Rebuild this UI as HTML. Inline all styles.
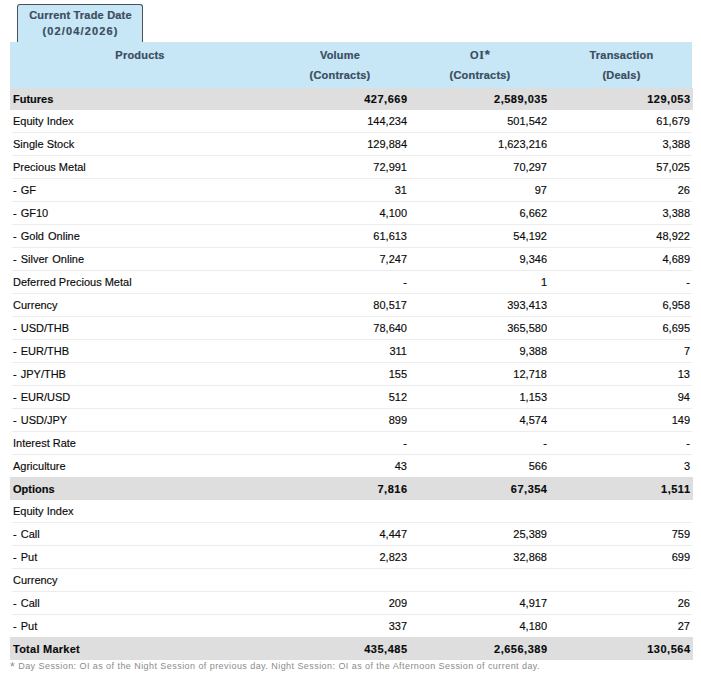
<!DOCTYPE html>
<html><head><meta charset="utf-8"><style>
html,body{margin:0;padding:0;background:#fff;width:701px;height:678px;overflow:hidden;position:relative;font-family:"Liberation Sans",sans-serif;}
.a{position:absolute;white-space:nowrap;}
.tab{position:absolute;left:17px;top:4px;width:124px;height:38px;border:1px solid #46525d;border-bottom:none;border-radius:3px 3px 0 0;background:#c7e7f7;}
.tabt{position:absolute;left:0;width:143px;text-align:center;font-weight:bold;font-size:11px;color:#3b4c5e;line-height:16px;-webkit-text-stroke:0.2px #3b4c5e;}
.hdr{position:absolute;left:10px;top:42px;width:682px;height:46px;background:#c7e7f7;}
.ht{position:absolute;font-weight:bold;font-size:11px;color:#3b4c5e;text-align:center;line-height:20px;letter-spacing:0.2px;-webkit-text-stroke:0.2px #3b4c5e;}
.g{position:absolute;left:10px;width:683px;background:#dedede;}
.ln{position:absolute;left:12px;width:680px;height:1px;background:#ececec;}
.c{position:absolute;font-size:11px;color:#0a0a0a;line-height:23px;white-space:nowrap;-webkit-text-stroke:0.15px #0a0a0a;}
.b{font-weight:bold;}
.r{text-align:right;}
.nb{letter-spacing:0.5px;margin-right:-0.5px}
.foot{position:absolute;left:10px;top:658px;font-size:9px;letter-spacing:0.44px;color:#8c8c8c;line-height:14px;white-space:nowrap;}
</style></head><body>

<div class="tab"></div>
<div class="tabt" style="top:7px;left:9px;width:143px;letter-spacing:0.2px">Current Trade Date</div>
<div class="tabt" style="top:23px;left:9px;width:143px;letter-spacing:1.15px">(02/04/2026)</div>
<div class="hdr"></div>
<div class="ht" style="left:10px;width:260px;top:45px">Products</div>
<div class="ht" style="left:270px;width:140px;top:45px">Volume</div>
<div class="ht" style="left:270px;width:140px;top:65px">(Contracts)</div>
<div class="ht" style="left:410px;width:140px;top:45px">O<span style="font-family:'Liberation Serif';font-size:12px;margin:0 0.5px">I</span><span style="font-size:13px;">*</span></div>
<div class="ht" style="left:410px;width:140px;top:65px">(Contracts)</div>
<div class="ht" style="left:550px;width:143px;top:45px">Transaction</div>
<div class="ht" style="left:550px;width:143px;top:65px">(Deals)</div>
<div class="g" style="top:88px;height:22px"></div>
<div class="c b" style="left:13px;top:88px">Futures</div>
<div class="c b r nb" style="right:294px;top:88px">427,669</div>
<div class="c b r nb" style="right:154px;top:88px">2,589,035</div>
<div class="c b r nb" style="right:11px;top:88px">129,053</div>
<div class="ln" style="top:132px"></div>
<div class="c" style="left:13px;top:110px">Equity Index</div>
<div class="c r" style="right:294px;top:110px">144,234</div>
<div class="c r" style="right:154px;top:110px">501,542</div>
<div class="c r" style="right:11px;top:110px">61,679</div>
<div class="ln" style="top:155px"></div>
<div class="c" style="left:13px;top:133px">Single Stock</div>
<div class="c r" style="right:294px;top:133px">129,884</div>
<div class="c r" style="right:154px;top:133px">1,623,216</div>
<div class="c r" style="right:11px;top:133px">3,388</div>
<div class="ln" style="top:178px"></div>
<div class="c" style="left:13px;top:156px">Precious Metal</div>
<div class="c r" style="right:294px;top:156px">72,991</div>
<div class="c r" style="right:154px;top:156px">70,297</div>
<div class="c r" style="right:11px;top:156px">57,025</div>
<div class="ln" style="top:201px"></div>
<div class="c" style="left:13px;top:179px;word-spacing:1px">- GF</div>
<div class="c r" style="right:294px;top:179px">31</div>
<div class="c r" style="right:154px;top:179px">97</div>
<div class="c r" style="right:11px;top:179px">26</div>
<div class="ln" style="top:224px"></div>
<div class="c" style="left:13px;top:202px;word-spacing:1px">- GF10</div>
<div class="c r" style="right:294px;top:202px">4,100</div>
<div class="c r" style="right:154px;top:202px">6,662</div>
<div class="c r" style="right:11px;top:202px">3,388</div>
<div class="ln" style="top:247px"></div>
<div class="c" style="left:13px;top:225px;word-spacing:1px">- Gold Online</div>
<div class="c r" style="right:294px;top:225px">61,613</div>
<div class="c r" style="right:154px;top:225px">54,192</div>
<div class="c r" style="right:11px;top:225px">48,922</div>
<div class="ln" style="top:270px"></div>
<div class="c" style="left:13px;top:248px;word-spacing:1px">- Silver Online</div>
<div class="c r" style="right:294px;top:248px">7,247</div>
<div class="c r" style="right:154px;top:248px">9,346</div>
<div class="c r" style="right:11px;top:248px">4,689</div>
<div class="ln" style="top:293px"></div>
<div class="c" style="left:13px;top:271px">Deferred Precious Metal</div>
<div class="c r" style="right:294px;top:271px">-</div>
<div class="c r" style="right:154px;top:271px">1</div>
<div class="c r" style="right:11px;top:271px">-</div>
<div class="ln" style="top:316px"></div>
<div class="c" style="left:13px;top:294px">Currency</div>
<div class="c r" style="right:294px;top:294px">80,517</div>
<div class="c r" style="right:154px;top:294px">393,413</div>
<div class="c r" style="right:11px;top:294px">6,958</div>
<div class="ln" style="top:339px"></div>
<div class="c" style="left:13px;top:317px;word-spacing:1px">- USD/THB</div>
<div class="c r" style="right:294px;top:317px">78,640</div>
<div class="c r" style="right:154px;top:317px">365,580</div>
<div class="c r" style="right:11px;top:317px">6,695</div>
<div class="ln" style="top:362px"></div>
<div class="c" style="left:13px;top:340px;word-spacing:1px">- EUR/THB</div>
<div class="c r" style="right:294px;top:340px">311</div>
<div class="c r" style="right:154px;top:340px">9,388</div>
<div class="c r" style="right:11px;top:340px">7</div>
<div class="ln" style="top:385px"></div>
<div class="c" style="left:13px;top:363px;word-spacing:1px">- JPY/THB</div>
<div class="c r" style="right:294px;top:363px">155</div>
<div class="c r" style="right:154px;top:363px">12,718</div>
<div class="c r" style="right:11px;top:363px">13</div>
<div class="ln" style="top:408px"></div>
<div class="c" style="left:13px;top:386px;word-spacing:1px">- EUR/USD</div>
<div class="c r" style="right:294px;top:386px">512</div>
<div class="c r" style="right:154px;top:386px">1,153</div>
<div class="c r" style="right:11px;top:386px">94</div>
<div class="ln" style="top:431px"></div>
<div class="c" style="left:13px;top:409px;word-spacing:1px">- USD/JPY</div>
<div class="c r" style="right:294px;top:409px">899</div>
<div class="c r" style="right:154px;top:409px">4,574</div>
<div class="c r" style="right:11px;top:409px">149</div>
<div class="ln" style="top:454px"></div>
<div class="c" style="left:13px;top:432px">Interest Rate</div>
<div class="c r" style="right:294px;top:432px">-</div>
<div class="c r" style="right:154px;top:432px">-</div>
<div class="c r" style="right:11px;top:432px">-</div>
<div class="c" style="left:13px;top:455px">Agriculture</div>
<div class="c r" style="right:294px;top:455px">43</div>
<div class="c r" style="right:154px;top:455px">566</div>
<div class="c r" style="right:11px;top:455px">3</div>
<div class="g" style="top:477px;height:23px"></div>
<div class="c b" style="left:13px;top:478px">Options</div>
<div class="c b r nb" style="right:294px;top:478px">7,816</div>
<div class="c b r nb" style="right:154px;top:478px">67,354</div>
<div class="c b r nb" style="right:11px;top:478px">1,511</div>
<div class="ln" style="top:522px"></div>
<div class="c" style="left:13px;top:500px">Equity Index</div>
<div class="ln" style="top:545px"></div>
<div class="c" style="left:13px;top:523px;word-spacing:1px">- Call</div>
<div class="c r" style="right:294px;top:523px">4,447</div>
<div class="c r" style="right:154px;top:523px">25,389</div>
<div class="c r" style="right:11px;top:523px">759</div>
<div class="ln" style="top:568px"></div>
<div class="c" style="left:13px;top:546px;word-spacing:1px">- Put</div>
<div class="c r" style="right:294px;top:546px">2,823</div>
<div class="c r" style="right:154px;top:546px">32,868</div>
<div class="c r" style="right:11px;top:546px">699</div>
<div class="ln" style="top:591px"></div>
<div class="c" style="left:13px;top:569px">Currency</div>
<div class="ln" style="top:614px"></div>
<div class="c" style="left:13px;top:592px;word-spacing:1px">- Call</div>
<div class="c r" style="right:294px;top:592px">209</div>
<div class="c r" style="right:154px;top:592px">4,917</div>
<div class="c r" style="right:11px;top:592px">26</div>
<div class="c" style="left:13px;top:615px;word-spacing:1px">- Put</div>
<div class="c r" style="right:294px;top:615px">337</div>
<div class="c r" style="right:154px;top:615px">4,180</div>
<div class="c r" style="right:11px;top:615px">27</div>
<div class="g" style="top:637px;height:23px"></div>
<div class="c b" style="left:13px;top:638px;letter-spacing:0.25px">Total Market</div>
<div class="c b r nb" style="right:294px;top:638px">435,485</div>
<div class="c b r nb" style="right:154px;top:638px">2,656,389</div>
<div class="c b r nb" style="right:11px;top:638px">130,564</div>
<div class="foot"><span style="font-size:12px;letter-spacing:0.6px;position:relative;top:2px">*</span> Day Session: OI as of the Night Session of previous day. Night Session: OI as of the Afternoon Session of current day.</div>
</body></html>
